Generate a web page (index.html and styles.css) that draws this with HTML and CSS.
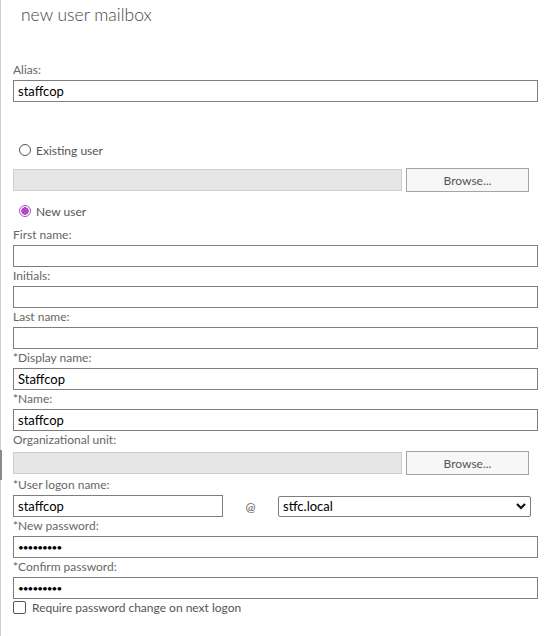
FILE: index.html
```html
<!DOCTYPE html>
<html lang="en">
	<head>
		<meta charset="utf-8" />
		<title>new user mailbox</title>
		<link rel="stylesheet" href="styles.css">
	</head>
	<body>
		<div class="scroll-mark"></div>
		<h1 class="title">new user mailbox</h1>

		<form class="form">
			<div class="alias">
				<label class="lbl">Alias:</label>
				<input class="txt" type="text" value="staffcop" />
			</div>

			<div class="radio-row existing">
				<span class="radio"></span>
				<span>Existing user</span>
			</div>
			<div class="browse-row">
				<input class="txt off" type="text" disabled />
				<button type="button" class="btn">Browse...</button>
			</div>

			<div class="radio-row newuser">
				<span class="radio on"></span>
				<span>New user</span>
			</div>

			<label class="lbl">First name:</label>
			<input class="txt" type="text" />
			<label class="lbl">Initials:</label>
			<input class="txt" type="text" />
			<label class="lbl">Last name:</label>
			<input class="txt" type="text" />
			<label class="lbl">*Display name:</label>
			<input class="txt" type="text" value="Staffcop" />
			<label class="lbl">*Name:</label>
			<input class="txt" type="text" value="staffcop" />
			<label class="lbl">Organizational unit:</label>
			<div class="browse-row ou">
				<input class="txt off" type="text" disabled />
				<button type="button" class="btn">Browse...</button>
			</div>

			<label class="lbl">*User logon name:</label>
			<div class="logon-row">
				<input class="txt logon" type="text" value="staffcop" />
				<span class="at">@</span>
				<div class="select">
					<span>stfc.local</span>
					<svg width="10" height="8" viewBox="0 0 10 8">
						<path d="M1 2 L5 6 L9 2" fill="none" stroke="#111" stroke-width="2.2" />
					</svg>
				</div>
			</div>

			<label class="lbl">*New password:</label>
			<input class="txt pwd" type="password" value="123456789" />
			<label class="lbl">*Confirm password:</label>
			<input class="txt pwd" type="password" value="123456789" />

			<div class="check-row">
				<span class="check"></span>
				<span>Require password change on next logon</span>
			</div>
		</form>
	</body>
</html>
```

FILE: styles.css
```css
* {
	box-sizing: border-box;
}
body {
	margin: 0;
	min-height: 636px;
	border-left: 1px solid #cfcfcf;
	font: 12px "Lato", "Open Sans", sans-serif;
	color: #666;
	background: #fff;
}
.scroll-mark {
	position: absolute;
	left: 0;
	top: 450px;
	width: 2px;
	height: 30px;
	background: #8a8a8a;
}
.title {
	margin: 0;
	padding: 3px 0 0 20px;
	height: 31px;
	font-size: 17.5px;
	font-weight: 300;
	line-height: 24px;
	color: #444;
}
.form {
	display: flex;
	flex-direction: column;
	align-items: flex-start;
	padding-left: 12px;
}
.alias {
	display: flex;
	flex-direction: column;
	margin-top: 30px;
}
.lbl {
	display: block;
	line-height: 18px;
	margin-bottom: 1px;
}
.txt {
	width: 525px;
	height: 22px;
	margin: 0;
	padding: 0 4px;
	border: 1px solid #7d7d7d;
	font: 13px "Lato", "Open Sans", sans-serif;
	color: #000;
	background: #fff;
	outline: none;
}
.txt.off {
	width: 389px;
	background: #e6e6e6;
	border-color: #c9cfd2;
}
.radio-row {
	display: flex;
	align-items: center;
	gap: 5px;
	height: 16px;
	padding-left: 6px;
	color: #555;
}
.existing {
	margin-top: 40px;
}
.newuser {
	margin-top: 11px;
	margin-bottom: 7px;
}
.radio {
	width: 12px;
	height: 12px;
	border: 1px solid #555;
	border-radius: 50%;
}
.radio.on {
	border-color: #b24ac4;
	background: radial-gradient(circle, #b24ac4 0 3.5px, #fff 4px);
}
.browse-row {
	display: flex;
	align-items: center;
	gap: 4px;
	height: 24px;
	margin-top: 10px;
}
.browse-row.ou {
	height: 26px;
	margin-top: 0;
}
.btn {
	width: 123px;
	height: 24px;
	margin: 0;
	border: 1px solid #9fa6a8;
	background: #f7f7f7;
	color: #555;
	font: 12px "Lato", "Open Sans", sans-serif;
}
.logon-row {
	display: flex;
	align-items: center;
}
.txt.logon {
	width: 210px;
}
.at {
	width: 55px;
	text-align: center;
	color: #555;
}
.select {
	display: flex;
	align-items: center;
	justify-content: space-between;
	width: 253px;
	height: 21px;
	padding: 0 4px 0 4px;
	border: 1px solid #7d7d7d;
	border-radius: 2px;
	font-size: 13px;
	color: #000;
}
.pwd {
	font-size: 10px;
	letter-spacing: -1px;
}
.check-row {
	display: flex;
	align-items: center;
	gap: 6px;
	height: 17px;
	color: #555;
}
.check {
	width: 13px;
	height: 13px;
	border: 1px solid #555;
	border-radius: 2px;
}
```
